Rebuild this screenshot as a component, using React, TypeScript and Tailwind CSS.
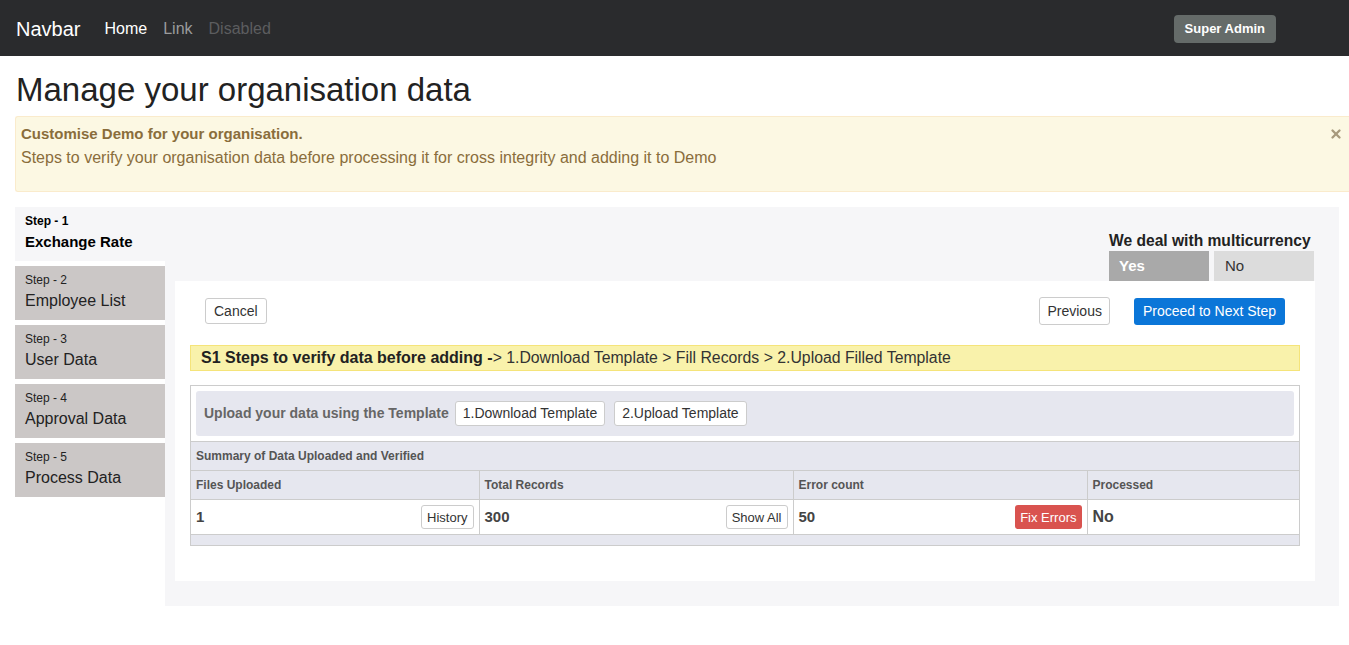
import { X } from 'lucide-react'

const steps = [
  { n: 1, label: 'Exchange Rate' },
  { n: 2, label: 'Employee List' },
  { n: 3, label: 'User Data' },
  { n: 4, label: 'Approval Data' },
  { n: 5, label: 'Process Data' },
]

function SmallBtn({ children }: { children: React.ReactNode }) {
  return (
    <button className="h-[24px] rounded-[3px] border border-[#ccc] bg-white px-[5px] text-[13px] leading-none text-[#333]">
      {children}
    </button>
  )
}

export default function App() {
  return (
    <div className="min-h-screen bg-white font-['Liberation_Sans',Arial,sans-serif] text-[#212529]">
      <nav className="flex h-[56px] items-center justify-between bg-[#2a2b2d] pl-4 pr-[73px]">
        <div className="flex items-center pt-[2px]">
          <span className="mr-6 text-[20px] text-white">Navbar</span>
          <div className="flex items-center gap-4 text-[16px]">
            <span className="text-white">Home</span>
            <span className="text-[#9a9b9c]">Link</span>
            <span className="text-[#5c5d5f]">Disabled</span>
          </div>
        </div>
        <button className="mt-[2px] h-[28px] rounded-[4px] bg-[#656b69] px-[11px] text-[13px] font-bold text-white">
          Super Admin
        </button>
      </nav>

      <div className="pl-[15px] pr-[10px]">
        <h1 className="pt-[14px] pb-[6px] pl-[1px] text-[33px] leading-[40px] text-[#222]">
          Manage your organisation data
        </h1>

        <div className="relative -mr-[10px] h-[76px] rounded-l-[3px] border border-r-0 border-[#faebcc] bg-[#fcf8e3] px-[5px] pt-[7px] text-[#8a6d3b]">
          <div className="text-[15px] font-bold leading-[20px]">Customise Demo for your organisation.</div>
          <div className="mt-[4px] text-[16px] leading-[20px]">
            Steps to verify your organisation data before processing it for cross integrity and adding it to Demo
          </div>
          <X className="absolute right-[6px] top-[10px] h-[14px] w-[14px] text-[#a89a7d]" strokeWidth={4} />
        </div>

        <div className="mt-[15px] flex">
          <div className="flex w-[150px] flex-col gap-[5px]">
            {steps.map((s) => (
              <div
                key={s.n}
                className={
                  s.n === 1
                    ? 'h-[54px] bg-[#f6f6f8] px-[10px] pt-[6px] text-black'
                    : 'h-[54px] bg-[#cbc7c6] px-[10px] pt-[6px] text-[#222]'
                }
              >
                <div className={s.n === 1 ? 'text-[12px] font-bold leading-[16px]' : 'text-[12px] leading-[16px]'}>
                  Step - {s.n}
                </div>
                <div className={s.n === 1 ? 'mt-[3px] text-[15px] font-bold leading-[20px]' : 'mt-[3px] text-[16px] leading-[20px]'}>
                  {s.label}
                </div>
              </div>
            ))}
          </div>

          <div className="flex h-[399px] flex-1 flex-col bg-[#f6f6f8] pl-[10px] pr-[24px]">
            <div className="flex justify-end pt-[25px] pr-[1px]">
              <div className="w-[205px]">
                <div className="whitespace-nowrap text-[15.6px] font-bold leading-[18px] text-[#222]">We deal with multicurrency</div>
                <div className="mt-[1px] flex gap-[5px]">
                  <div className="flex h-[30px] w-[100px] items-center bg-[#a9a9a9] pl-[10px] text-[15px] font-bold text-white">Yes</div>
                  <div className="flex h-[30px] w-[100px] items-center bg-[#dcdcdc] pl-[11px] text-[15px] text-[#333]">No</div>
                </div>
              </div>
            </div>

            <div className="h-[300px] bg-white px-[15px] pt-[16px]">
              <div className="flex items-center justify-between pl-[15px] pr-[15px]">
                <button className="h-[26px] rounded-[3px] border border-[#ccc] bg-white px-[8px] text-[14px] text-[#333]">
                  Cancel
                </button>
                <div className="flex items-center gap-[24px]">
                  <button className="h-[28px] rounded-[3px] border border-[#ccc] bg-white px-[7px] text-[14px] text-[#333]">
                    Previous
                  </button>
                  <button className="h-[27px] rounded-[3px] bg-[#0b76d8] px-[9px] text-[14px] text-white">
                    Proceed to Next Step
                  </button>
                </div>
              </div>

              <div className="mt-[20px] flex h-[26px] items-center border border-[#f5e47a] bg-[#f9f2ab] pl-[10px] text-[#333]">
                <span className="text-[16px] font-bold text-[#222]">S1 Steps to verify data before adding -</span>
                <span className="text-[15.8px]">&gt; 1.Download Template &gt; Fill Records &gt; 2.Upload Filled Template</span>
              </div>

              <div className="mt-[14px] border border-[#ccc]">
                <div className="p-[5px]">
                  <div className="flex h-[45px] items-center gap-[6px] rounded-[3px] bg-[#e6e7ef] pl-[8px]">
                    <span className="text-[14px] font-bold text-[#666]">Upload your data using the Template</span>
                    <button className="h-[25px] rounded-[3px] border border-[#ccc] bg-white px-[7px] text-[14px] text-[#333]">
                      1.Download Template
                    </button>
                    <button className="ml-[3px] h-[25px] rounded-[3px] border border-[#ccc] bg-white px-[7px] text-[14px] text-[#333]">
                      2.Upload Template
                    </button>
                  </div>
                </div>
                <table className="w-full border-collapse text-[12px] text-[#555]">
                  <tbody>
                    <tr className="h-[29px] bg-[#e6e7ef]">
                      <td colSpan={4} className="border-t border-[#ccc] px-[5px] font-bold">
                        Summary of Data Uploaded and Verified
                      </td>
                    </tr>
                    <tr className="h-[29px] bg-[#e6e7ef]">
                      <td className="w-[288px] border-t border-r border-[#ccc] px-[5px] font-bold">Files Uploaded</td>
                      <td className="w-[314px] border-t border-r border-[#ccc] px-[5px] font-bold">Total Records</td>
                      <td className="w-[294px] border-t border-r border-[#ccc] px-[5px] font-bold">Error count</td>
                      <td className="border-t border-[#ccc] px-[5px] font-bold">Processed</td>
                    </tr>
                    <tr className="h-[35px] bg-white">
                      <td className="border-t border-r border-[#ccc] px-[5px]">
                        <div className="flex items-center justify-between">
                          <span className="text-[15px] font-bold text-[#444]">1</span>
                          <SmallBtn>History</SmallBtn>
                        </div>
                      </td>
                      <td className="border-t border-r border-[#ccc] px-[5px]">
                        <div className="flex items-center justify-between">
                          <span className="text-[15px] font-bold text-[#444]">300</span>
                          <SmallBtn>Show All</SmallBtn>
                        </div>
                      </td>
                      <td className="border-t border-r border-[#ccc] px-[5px]">
                        <div className="flex items-center justify-between">
                          <span className="text-[15px] font-bold text-[#444]">50</span>
                          <button className="h-[24px] rounded-[3px] bg-[#d9534f] px-[5px] text-[13px] leading-none text-white">
                            Fix Errors
                          </button>
                        </div>
                      </td>
                      <td className="border-t border-[#ccc] px-[5px]">
                        <span className="text-[16px] font-bold text-[#444]">No</span>
                      </td>
                    </tr>
                    <tr className="h-[10px] bg-[#e6e7ef]">
                      <td colSpan={4} className="border-t border-[#ccc]"></td>
                    </tr>
                  </tbody>
                </table>
              </div>
            </div>
          </div>
        </div>
      </div>
    </div>
  )
}
